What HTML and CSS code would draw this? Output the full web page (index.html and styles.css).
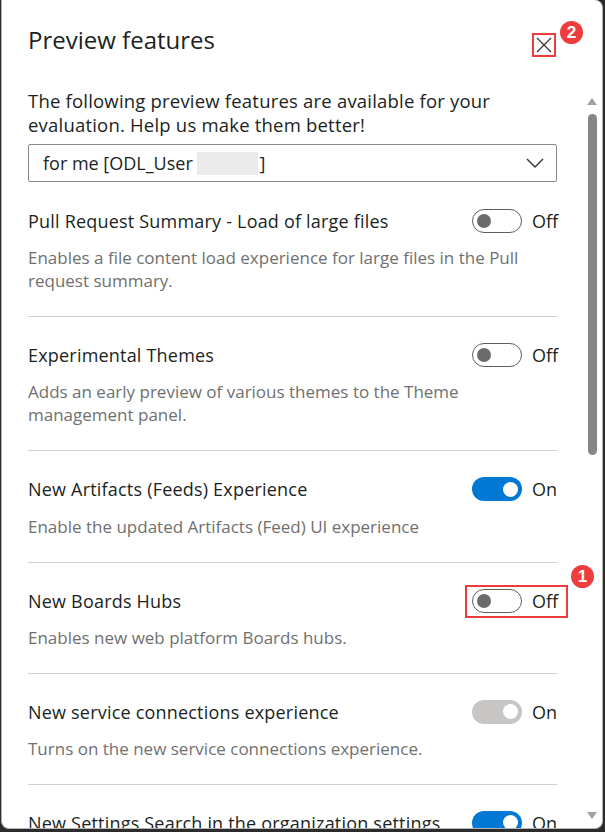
FILE: index.html
```html
<!DOCTYPE html>
<html>
<head>
<meta charset="utf-8">
<link rel="stylesheet" href="styles.css">
</head>
<body>
<div class="dialog">
  <div class="header">
    <h1 class="title">Preview features</h1>
    <div class="close">
      <svg width="20" height="20" viewBox="0 0 20 20"><path d="M3 3 L17 17 M17 3 L3 17" stroke="#333" stroke-width="1.2" fill="none"/></svg>
      <span class="badge badge-2">2</span>
    </div>
  </div>
  <div class="body">
    <div class="content">
      <p class="intro">The following preview features are available for your evaluation. Help us make them better!</p>
      <div class="dropdown">
        <span class="dd-text">for me [ODL_User <span class="redact"></span>]</span>
        <svg class="chev" width="18" height="10" viewBox="0 0 18 10"><path d="M1 1 L9 9 L17 1" stroke="#333" stroke-width="1.4" fill="none"/></svg>
      </div>
      <div class="feature first">
        <div class="row">
          <span class="name">Pull Request Summary - Load of large files</span>
          <div class="control"><span class="toggle off"><span class="knob"></span></span><span class="state">Off</span></div>
        </div>
        <p class="desc">Enables a file content load experience for large files in the Pull request summary.</p>
      </div>
      <div class="feature">
        <div class="row">
          <span class="name">Experimental Themes</span>
          <div class="control"><span class="toggle off"><span class="knob"></span></span><span class="state">Off</span></div>
        </div>
        <p class="desc">Adds an early preview of various themes to the Theme management panel.</p>
      </div>
      <div class="feature">
        <div class="row">
          <span class="name">New Artifacts (Feeds) Experience</span>
          <div class="control"><span class="toggle on"><span class="knob"></span></span><span class="state">On</span></div>
        </div>
        <p class="desc">Enable the updated Artifacts (Feed) UI experience</p>
      </div>
      <div class="feature">
        <div class="row">
          <span class="name">New Boards Hubs</span>
          <div class="control highlighted"><span class="toggle off"><span class="knob"></span></span><span class="state">Off</span><span class="hl-box"></span><span class="badge badge-1">1</span></div>
        </div>
        <p class="desc">Enables new web platform Boards hubs.</p>
      </div>
      <div class="feature">
        <div class="row">
          <span class="name">New service connections experience</span>
          <div class="control"><span class="toggle disabled"><span class="knob"></span></span><span class="state">On</span></div>
        </div>
        <p class="desc">Turns on the new service connections experience.</p>
      </div>
      <div class="feature">
        <div class="row">
          <span class="name">New Settings Search in the organization settings</span>
          <div class="control"><span class="toggle on"><span class="knob"></span></span><span class="state">On</span></div>
        </div>
        <p class="desc">Enables the new settings search experience.</p>
      </div>
    </div>
    <div class="scrollbar">
      <span class="arrow up"></span>
      <span class="thumb"></span>
      <span class="spacer"></span>
      <span class="arrow down"></span>
    </div>
  </div>
</div>
</body>
</html>
```
FILE: styles.css
```css
html {
  background: #2b2b2b;
}
body {
  margin: 0;
  padding: 0 2px 3px 1px;
  font-family: "Open Sans", "Noto Sans", sans-serif;
  color: #201f1e;
}
.dialog {
  height: 828px;
  background: #fff;
  border: 1px solid #b4b4b4;
  border-top: none;
  border-radius: 0 8px 8px 8px;
  overflow: hidden;
  display: flex;
  flex-direction: column;
}
.header {
  height: 89px;
  flex: none;
  display: flex;
  justify-content: space-between;
  align-items: flex-start;
  padding: 25px 46px 0 26px;
  box-sizing: border-box;
}
.title {
  margin: 0;
  font-size: 24px;
  font-weight: 400;
  line-height: 30px;
  color: #201f1e;
}
.close {
  position: relative;
  margin-top: 8px;
  width: 24px;
  height: 24px;
  box-sizing: border-box;
  border: 2px solid #ee3b3b;
  display: flex;
  align-items: center;
  justify-content: center;
}
.badge {
  position: absolute;
  width: 23px;
  height: 23px;
  border-radius: 50%;
  background: #ef3c3c;
  color: #fff;
  font-family: "Liberation Sans", Arial, sans-serif;
  font-weight: 700;
  font-size: 17px;
  line-height: 23px;
  text-align: center;
}
.badge-2 {
  left: 26px;
  top: -14px;
}
.body {
  flex: 1;
  display: flex;
  min-height: 0;
}
.content {
  width: 529px;
  margin-left: 26px;
  flex: none;
}
.intro {
  margin: 0;
  font-size: 18.5px;
  letter-spacing: 0.2px;
  line-height: 24px;
  color: #201f1e;
}
.dropdown {
  margin-top: 7px;
  height: 38px;
  box-sizing: border-box;
  border: 1px solid #8a8886;
  border-radius: 2px;
  display: flex;
  align-items: center;
  justify-content: space-between;
  padding: 0 12px 0 14px;
}
.dd-text {
  font-size: 18px;
  color: #201f1e;
  display: flex;
  align-items: center;
  white-space: pre;
}
.redact {
  display: inline-block;
  width: 61px;
  height: 23px;
  background: #ebebeb;
  margin: 0 1px 0 0;
}
.feature {
  padding: 26px 0 24px;
  border-bottom: 1px solid #d2d0ce;
}
.feature.first {
  padding-top: 27px;
}
.row {
  display: flex;
  align-items: center;
  justify-content: space-between;
  height: 24px;
}
.name {
  font-size: 18px;
  letter-spacing: 0.2px;
  color: #201f1e;
  white-space: nowrap;
}
.control {
  position: relative;
  display: flex;
  align-items: center;
  gap: 10px;
}
.toggle {
  width: 50px;
  height: 24px;
  box-sizing: border-box;
  border-radius: 12px;
  display: flex;
  align-items: center;
  padding: 0 4px;
}
.toggle .knob {
  width: 14px;
  height: 14px;
  border-radius: 50%;
}
.toggle.off {
  border: 1px solid #605e5c;
  background: #fff;
}
.toggle.off .knob {
  background: #6b6b6b;
}
.toggle.on {
  background: #0078d4;
  justify-content: flex-end;
}
.toggle.on .knob,
.toggle.disabled .knob {
  background: #fff;
  width: 15px;
  height: 15px;
}
.toggle.disabled {
  background: #c8c6c4;
  justify-content: flex-end;
}
.state {
  font-size: 18px;
  color: #201f1e;
  width: 25px;
}
.hl-box {
  position: absolute;
  left: -7px;
  top: -4px;
  right: -11px;
  bottom: -5px;
  border: 2px solid #ee3b3b;
}
.badge-1 {
  left: 99px;
  top: -24px;
}
.desc {
  margin: 13.2px 0 0;
  font-size: 17px;
  line-height: 23px;
  color: #707070;
}
.scrollbar {
  margin-left: 29px;
  width: 12px;
  display: flex;
  flex-direction: column;
  align-items: center;
  padding: 9px 0 9px;
  box-sizing: border-box;
}
.arrow {
  width: 0;
  height: 0;
  border-left: 5px solid transparent;
  border-right: 5px solid transparent;
}
.arrow.up {
  border-bottom: 7px solid #a0a0a0;
}
.arrow.down {
  border-top: 7px solid #a0a0a0;
}
.thumb {
  margin-top: 9px;
  width: 9px;
  height: 341px;
  border-radius: 5px;
  background: #868686;
}
.spacer {
  flex: 1;
}
```
